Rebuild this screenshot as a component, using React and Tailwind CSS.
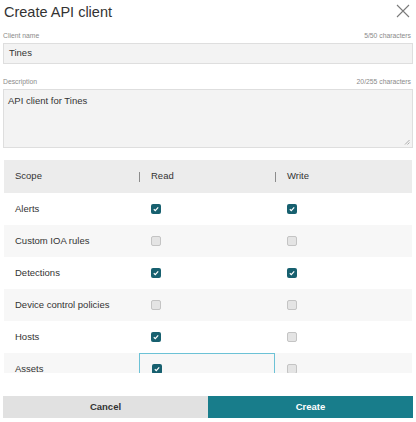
import { useState } from 'react';

const font = { fontFamily: '"Liberation Sans", Arial, sans-serif' };

const scopes = [
  { name: 'Alerts', read: true, write: true },
  { name: 'Custom IOA rules', read: false, write: false },
  { name: 'Detections', read: true, write: true },
  { name: 'Device control policies', read: false, write: false },
  { name: 'Hosts', read: true, write: false },
  { name: 'Assets', read: true, write: false, focus: true },
];

function Box({ checked }) {
  if (checked) {
    return (
      <span className="flex h-[10px] w-[10px] items-center justify-center rounded-[2px] bg-[#17606f]">
        <svg width="6" height="6" viewBox="0 0 6 6">
          <path d="M0.8 3.2 L2.3 4.6 L5.2 1.4" fill="none" stroke="white" strokeWidth="1.2" />
        </svg>
      </span>
    );
  }
  return <span className="block h-[10px] w-[10px] rounded-[2px] border border-[#c4c4c4] bg-[#e4e4e4]" />;
}

export default function App() {
  const [rows] = useState(scopes);

  return (
    <div className="h-[422px] w-[416px] overflow-hidden bg-white text-[#333]" style={font}>
      <div className="flex items-center justify-between pl-[4px] pr-[6px] pt-[2px]">
        <h1 className="text-[14.5px] leading-[20px] text-[#333]">Create API client</h1>
        <svg width="14" height="14" viewBox="0 0 14 14" className="mt-[-2px]">
          <path d="M1 1 L13 13 M13 1 L1 13" stroke="#7a7a7a" strokeWidth="1.1" />
        </svg>
      </div>

      <div className="px-[3px]">
        <div className="mt-[10px] flex h-[8px] items-center justify-between text-[6.8px] text-[#8a8a8a]">
          <span>Client name</span>
          <span className="pr-[2px]">5/50 characters</span>
        </div>
        <div className="mt-[3px] flex h-[21px] items-center border border-[#dedede] bg-[#f3f3f3] px-[5px] text-[9.5px] text-[#333]">
          Tines
        </div>

        <div className="mt-[14px] flex h-[8px] items-center justify-between text-[6.8px] text-[#8a8a8a]">
          <span>Description</span>
          <span className="pr-[2px]">20/255 characters</span>
        </div>
        <div className="relative mt-[3px] h-[59px] border border-[#dedede] bg-[#f3f3f3] px-[4px] pt-[4px] text-[9.5px] text-[#333]">
          API client for Tines
          <svg width="6" height="6" viewBox="0 0 6 6" className="absolute bottom-[2px] right-[2px]">
            <path d="M5.5 1 L1 5.5 M5.5 3.5 L3.5 5.5" stroke="#9a9a9a" strokeWidth="0.8" />
          </svg>
        </div>
      </div>

      <div className="mx-[4px] mt-[12px] h-[213px] overflow-hidden">
        <div className="grid h-[33px] grid-cols-[135px_136px_1fr] items-center bg-[#ececec] text-[9.5px] text-[#333]">
          <div className="pl-[11px]">Scope</div>
          <div className="flex items-center">
            <span className="h-[10px] w-px bg-[#8c8c8c]" />
            <span className="pl-[11px]">Read</span>
          </div>
          <div className="flex items-center">
            <span className="h-[10px] w-px bg-[#8c8c8c]" />
            <span className="pl-[11px]">Write</span>
          </div>
        </div>
        {rows.map((r, i) => (
          <div
            key={r.name}
            className={
              'grid h-[32px] grid-cols-[135px_136px_1fr] items-center text-[9.5px] text-[#333] ' +
              (i % 2 === 1 ? 'bg-[#f7f7f7]' : 'bg-white')
            }
          >
            <div className="pl-[11px]">{r.name}</div>
            <div
              className={
                'flex h-full items-center pl-[12px] ' +
                (r.focus ? 'border border-[#6cc2d6] pl-[10px]' : '')
              }
            >
              <Box checked={r.read} />
            </div>
            <div className="flex h-full items-center pl-[12px]">
              <Box checked={r.write} />
            </div>
          </div>
        ))}
      </div>

      <div className="mx-[3px] mt-[23px] flex h-[22px] text-[9.5px] font-bold">
        <button className="flex-1 bg-[#e1e1e1] text-[#333]">Cancel</button>
        <button className="flex-1 bg-[#187d8b] text-white">Create</button>
      </div>
    </div>
  );
}
